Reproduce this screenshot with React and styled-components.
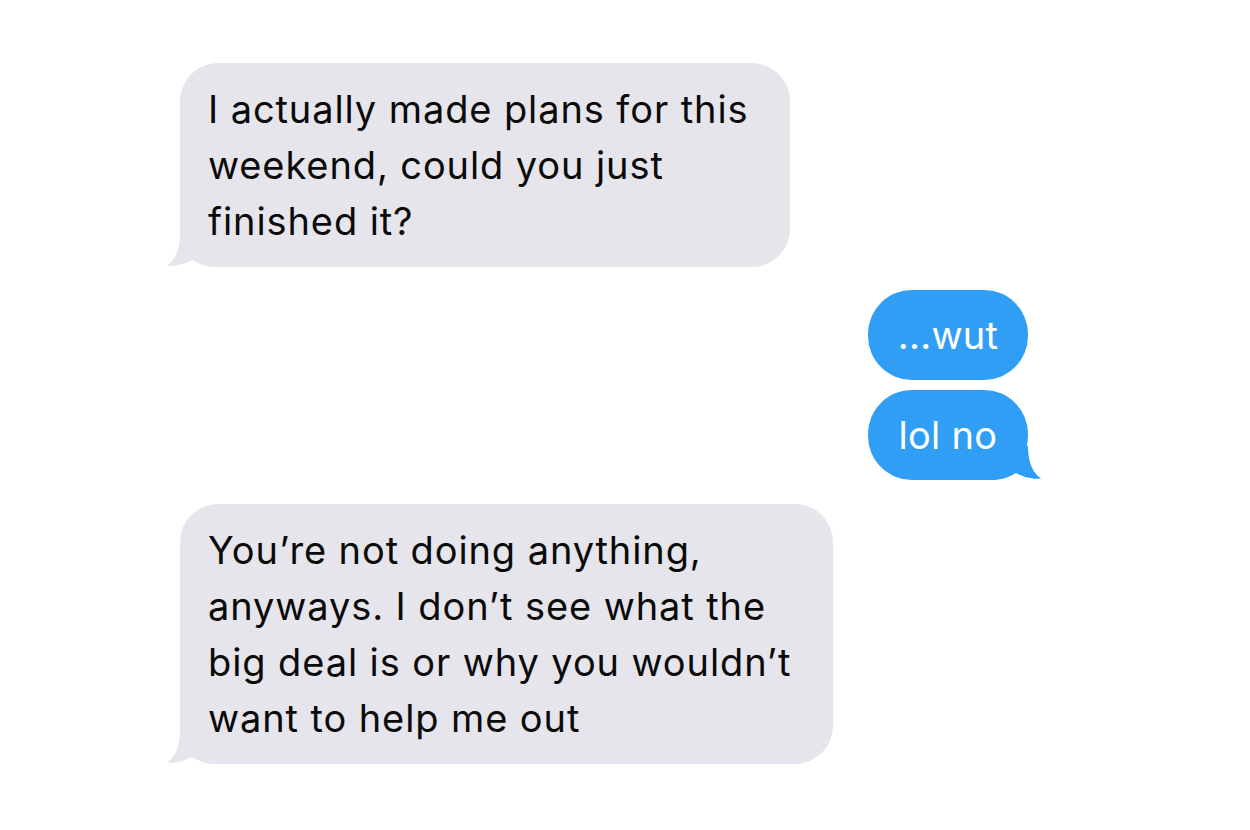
import styled, { createGlobalStyle } from 'styled-components';

const GlobalStyle = createGlobalStyle`
    html, body {
        margin: 0;
        padding: 0;
        background: #ffffff;
    }
    body {
        font-family: Inter, "Liberation Sans", Arial, sans-serif;
        -webkit-font-smoothing: antialiased;
    }
`;

const Thread = styled.div`
    width: 1250px;
    height: 830px;
    box-sizing: border-box;
    padding: 63px 222px 0 180px;
    display: flex;
    flex-direction: column;
    background: #ffffff;
`;

const Group = styled.div`
    display: flex;
    flex-direction: column;
    align-items: ${({ $out }) => ($out ? 'flex-end' : 'flex-start')};
    gap: 10px;
    margin-top: ${({ $top }) => $top || 0}px;
`;

const Bubble = styled.div`
    position: relative;
    box-sizing: border-box;
    font-size: 38px;
    line-height: 56px;
    letter-spacing: ${({ $out }) => ($out ? '0.3px' : '0.9px')};
    color: ${({ $out }) => ($out ? '#ffffff' : '#0b0b0b')};
    background: ${({ $out }) => ($out ? '#309ef5' : '#e6e5eb')};
    border-radius: ${({ $out }) => ($out ? '44px' : '38px')};
    padding: ${({ $out }) => ($out ? '17px 28px' : '18px 42px 18px 28px')};
    min-width: ${({ $out }) => ($out ? '160px' : '0')};
    text-align: ${({ $out }) => ($out ? 'center' : 'left')};
    white-space: nowrap;
`;

const Line = styled.span`
    position: relative;
    display: block;
`;

const Tail = styled.svg`
    position: absolute;
    bottom: 0;
    width: 64px;
    height: 34px;
    ${({ $out }) => ($out ? 'right: -13px; transform: scaleX(-1);' : 'left: -13px;')}
`;

const BubbleTail = ({ out, color }) => (
    <Tail $out={out} viewBox="0 0 64 34" aria-hidden="true">
        <path
            d="M13 0 C13 17 8 27 0 32.5 C8 33.6 18 31 25 27 C30 30 36 33 46 34 L64 34 L64 0 Z"
            fill={color}
        />
    </Tail>
);

const Message = ({ lines, out, tail }) => (
    <Bubble $out={out}>
        {tail && <BubbleTail out={out} color={out ? '#309ef5' : '#e6e5eb'} />}
        {lines.map((line, i) => (
            <Line key={i}>{line}</Line>
        ))}
    </Bubble>
);

export default function App() {
    return (
        <>
            <GlobalStyle />
            <Thread>
                <Group>
                    <Message
                        tail
                        lines={[
                            'I actually made plans for this',
                            'weekend, could you just',
                            'finished it?'
                        ]}
                    />
                </Group>
                <Group $out $top={23}>
                    <Message out lines={['...wut']} />
                    <Message out tail lines={['lol no']} />
                </Group>
                <Group $top={24}>
                    <Message
                        tail
                        lines={[
                            'You\u2019re not doing anything,',
                            'anyways. I don\u2019t see what the',
                            'big deal is or why you wouldn\u2019t',
                            'want to help me out'
                        ]}
                    />
                </Group>
            </Thread>
        </>
    );
}
